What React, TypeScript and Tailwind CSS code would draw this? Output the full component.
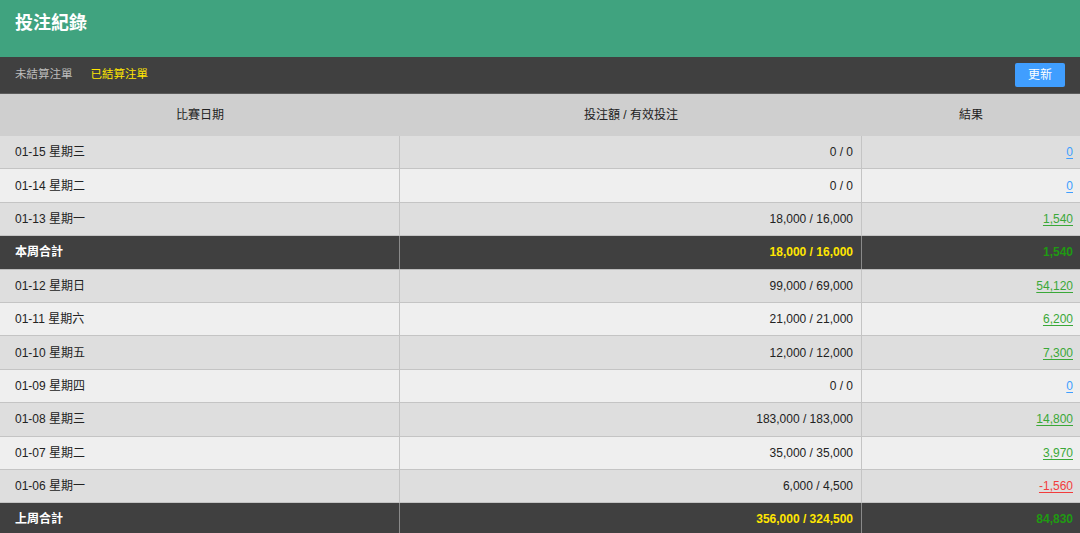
import React from "react";

type Row = {
  date?: string;
  label?: string;
  amount: string;
  result: string;
  kind: "day" | "total";
};

const ROWS: Row[] = [
  { date: "01-15 星期三", amount: "0 / 0", result: "0", kind: "day" },
  { date: "01-14 星期二", amount: "0 / 0", result: "0", kind: "day" },
  { date: "01-13 星期一", amount: "18,000 / 16,000", result: "1,540", kind: "day" },
  { label: "本周合計", amount: "18,000 / 16,000", result: "1,540", kind: "total" },
  { date: "01-12 星期日", amount: "99,000 / 69,000", result: "54,120", kind: "day" },
  { date: "01-11 星期六", amount: "21,000 / 21,000", result: "6,200", kind: "day" },
  { date: "01-10 星期五", amount: "12,000 / 12,000", result: "7,300", kind: "day" },
  { date: "01-09 星期四", amount: "0 / 0", result: "0", kind: "day" },
  { date: "01-08 星期三", amount: "183,000 / 183,000", result: "14,800", kind: "day" },
  { date: "01-07 星期二", amount: "35,000 / 35,000", result: "3,970", kind: "day" },
  { date: "01-06 星期一", amount: "6,000 / 4,500", result: "-1,560", kind: "day" },
  { label: "上周合計", amount: "356,000 / 324,500", result: "84,830", kind: "total" },
];

function resultColor(v: string) {
  if (v === "0") return "text-[#409eff]";
  if (v.startsWith("-")) return "text-[#f23c3c]";
  return "text-[#3aa838]";
}

export default function App() {
  return (
    <div className="w-[1080px] h-[533px] overflow-hidden bg-[#efefef] font-['Liberation_Sans','Noto_Sans_CJK_TC',sans-serif] text-[12px] text-[#222]">
      <div className="h-[57px] bg-[#40a37f] flex items-center px-[15px]">
        <h1 className="text-[18px] font-bold text-white -mt-[11px]">投注紀錄</h1>
      </div>

      <div className="h-[37px] bg-[#404040] border-b border-[#5c5c5c] flex items-center px-[15px]">
        <span className="text-[11.5px] text-[#bdbdbd]">未結算注單</span>
        <span className="ml-[18px] text-[11.5px] text-[#ffe600]">已結算注單</span>
        <button className="ml-auto w-[50px] h-[24px] rounded-[2px] bg-[#409eff] text-white text-[12px]">
          更新
        </button>
      </div>

      <div className="grid grid-cols-[400px_462px_218px] h-[42px] bg-[#cfcfcf] items-center text-center text-[#222]">
        <div>比賽日期</div>
        <div>投注額 / 有效投注</div>
        <div>結果</div>
      </div>

      {ROWS.map((r, i) => {
        if (r.kind === "total") {
          return (
            <div
              key={i}
              className="grid grid-cols-[400px_462px_218px] h-[33.4px] bg-[#404040] border-b border-[#bcbcbc] font-bold"
            >
              <div className="flex items-center px-[15px] text-white border-r border-[#8a8a8a]">{r.label}</div>
              <div className="flex items-center justify-end px-[8px] text-[#ffe600] border-r border-[#8a8a8a]">
                {r.amount}
              </div>
              <div className="flex items-center justify-end px-[7px] text-[#1f9a12]">{r.result}</div>
            </div>
          );
        }
        return (
          <div
            key={i}
            className={`grid grid-cols-[400px_462px_218px] h-[33.4px] border-b border-[#c4c4c4] ${
              i % 2 === 0 ? "bg-[#dedede]" : "bg-[#efefef]"
            }`}
          >
            <div className="flex items-center px-[15px] border-r border-[#c4c4c4]">{r.date}</div>
            <div className="flex items-center justify-end px-[8px] border-r border-[#c4c4c4]">{r.amount}</div>
            <div className="flex items-center justify-end px-[7px]">
              <a href="#" className={`underline underline-offset-2 ${resultColor(r.result)}`}>
                {r.result}
              </a>
            </div>
          </div>
        );
      })}
    </div>
  );
}
